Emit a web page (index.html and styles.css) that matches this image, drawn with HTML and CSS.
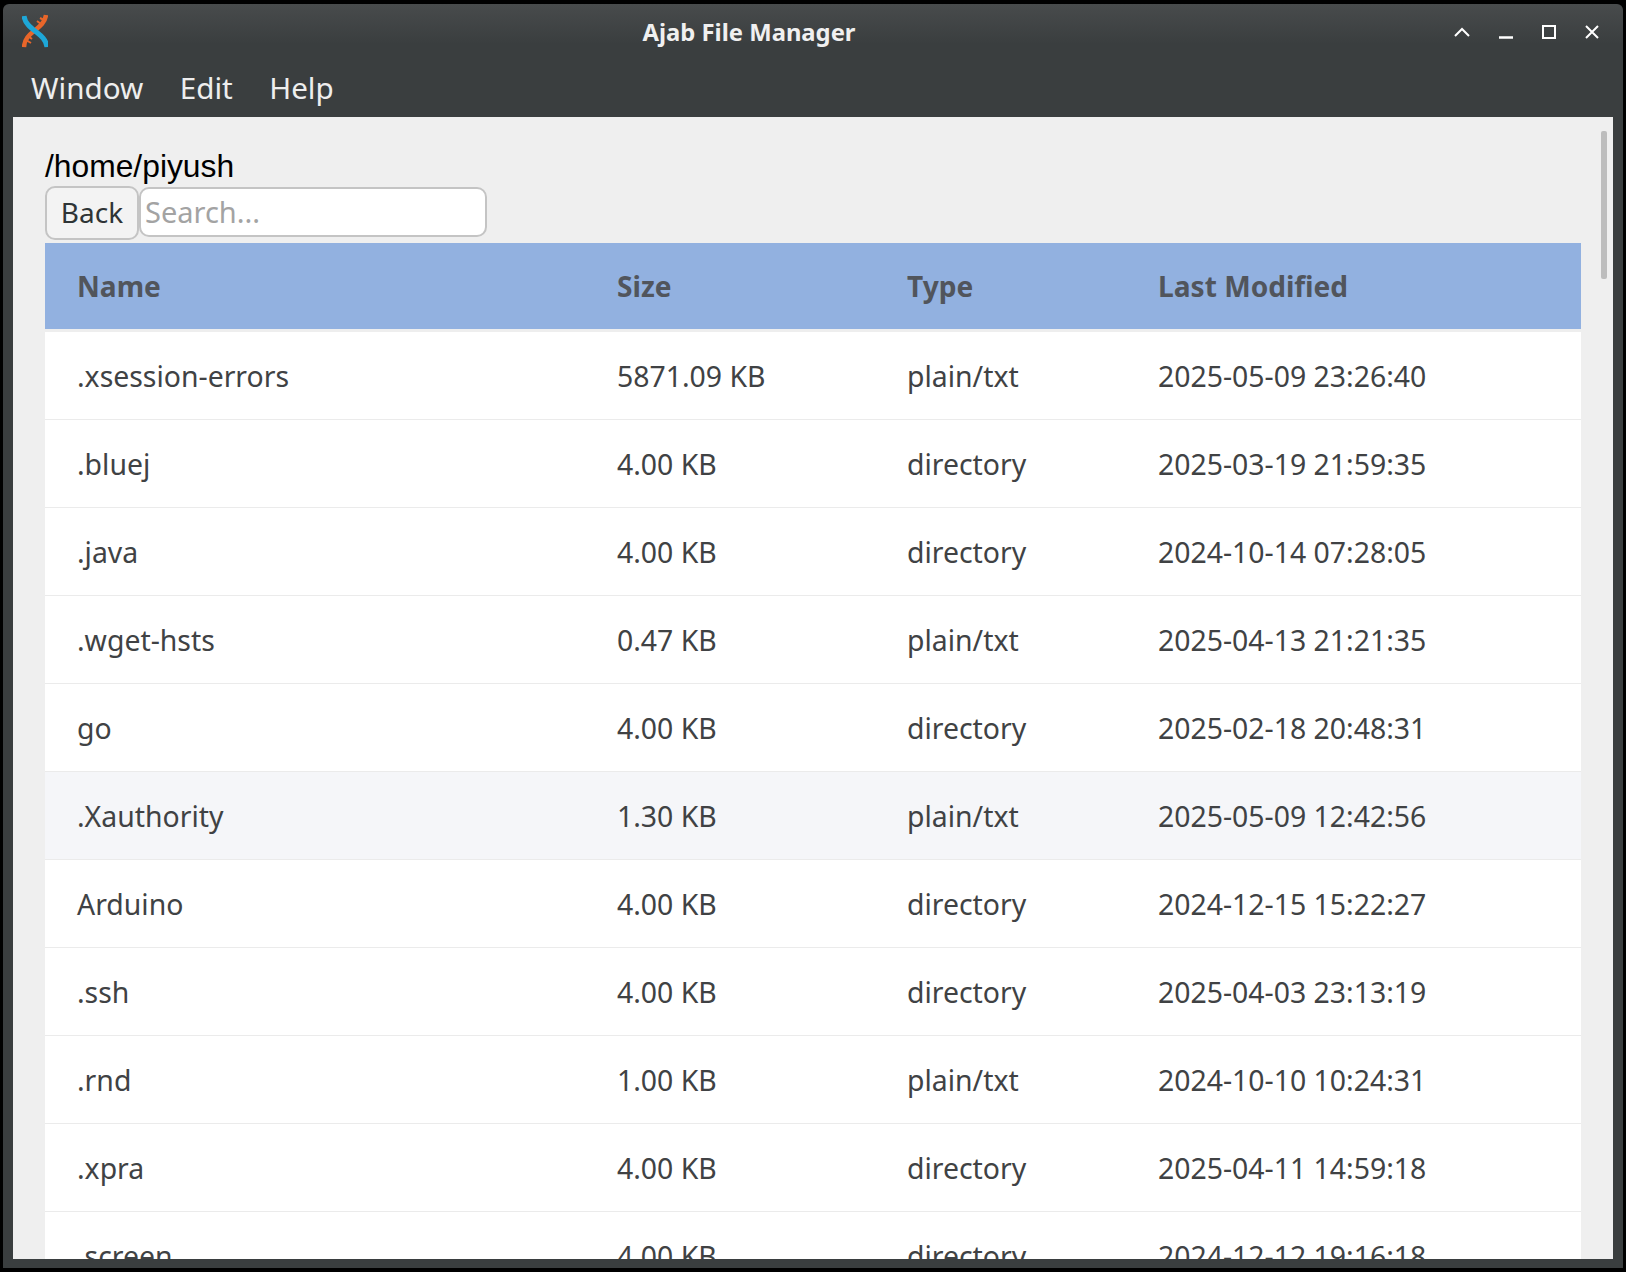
FILE: index.html
```html
<!DOCTYPE html>
<html lang="en">
<head>
  <meta charset="UTF-8">
  <title>Ajab File Manager</title>
  <link rel="stylesheet" href="styles.css">
</head>
<body>
  <div class="window">
    <div class="titlebar">
      <svg class="app-icon" viewBox="0 0 26 34" width="26" height="34">
        <path d="M24 1 C23 9 17 13 12 17 C7 21 2.500 25 2 33" fill="none" stroke="#e8662a" stroke-width="4.500"/>
        <path d="M15 7 L19 10 M18 4 L22 6 M4 26 L9 29 M6 22 L10 25" stroke="#e8662a" stroke-width="2"/>
        <path d="M2 2 C3 9 8 13 13 17 C18 21 24 25 25 33" fill="none" stroke="#1ea7d8" stroke-width="5"/>
      </svg>
      <div class="title">Ajab File Manager</div>
      <div class="controls">
        <svg viewBox="0 0 16 10" width="16" height="10"><path d="M1 9 L8 2 L15 9" fill="none" stroke="#fff" stroke-width="2"/></svg>
        <svg class="ctl-min" viewBox="0 0 14 3" width="14" height="3"><path d="M0 1.500 H14" stroke="#fff" stroke-width="2.500"/></svg>
        <svg viewBox="0 0 14 14" width="14" height="14"><rect x="1" y="1" width="12" height="12" fill="none" stroke="#fff" stroke-width="2"/></svg>
        <svg viewBox="0 0 14 14" width="14" height="14"><path d="M1 1 L13 13 M13 1 L1 13" fill="none" stroke="#fff" stroke-width="2"/></svg>
      </div>
    </div>
    <div class="menubar">
      <span>Window</span>
      <span>Edit</span>
      <span>Help</span>
    </div>
    <div class="content">
      <div class="scroll-thumb"></div>
      <div class="path">/home/piyush</div>
      <div class="toolbar">
        <button class="back">Back</button>
        <input class="search" type="text" placeholder="Search...">
      </div>
      <table class="files">
        <colgroup>
          <col class="col-name"><col class="col-size"><col class="col-type"><col class="col-date">
        </colgroup>
        <thead>
          <tr><th>Name</th><th>Size</th><th>Type</th><th>Last Modified</th></tr>
        </thead>
        <tbody>
          <tr><td>.xsession-errors</td><td>5871.09 KB</td><td>plain/txt</td><td>2025-05-09 23:26:40</td></tr>
          <tr><td>.bluej</td><td>4.00 KB</td><td>directory</td><td>2025-03-19 21:59:35</td></tr>
          <tr><td>.java</td><td>4.00 KB</td><td>directory</td><td>2024-10-14 07:28:05</td></tr>
          <tr><td>.wget-hsts</td><td>0.47 KB</td><td>plain/txt</td><td>2025-04-13 21:21:35</td></tr>
          <tr><td>go</td><td>4.00 KB</td><td>directory</td><td>2025-02-18 20:48:31</td></tr>
          <tr class="hover"><td>.Xauthority</td><td>1.30 KB</td><td>plain/txt</td><td>2025-05-09 12:42:56</td></tr>
          <tr><td>Arduino</td><td>4.00 KB</td><td>directory</td><td>2024-12-15 15:22:27</td></tr>
          <tr><td>.ssh</td><td>4.00 KB</td><td>directory</td><td>2025-04-03 23:13:19</td></tr>
          <tr><td>.rnd</td><td>1.00 KB</td><td>plain/txt</td><td>2024-10-10 10:24:31</td></tr>
          <tr><td>.xpra</td><td>4.00 KB</td><td>directory</td><td>2025-04-11 14:59:18</td></tr>
          <tr><td>.screen</td><td>4.00 KB</td><td>directory</td><td>2024-12-12 19:16:18</td></tr>
        </tbody>
      </table>
    </div>
  </div>
</body>
</html>
```

FILE: styles.css
```css
html, body {
  height: 100%;
}
body {
  margin: 0;
  padding: 4px 3px;
  box-sizing: border-box;
  background: #000;
  overflow: hidden;
  font-family: "Noto Sans", sans-serif;
}
.window {
  height: 100%;
  display: flex;
  flex-direction: column;
  background: linear-gradient(#484b4c, #3a3e3f 40px);
  border-radius: 6px 6px 0 0;
  padding: 0 10px 9px;
  box-sizing: border-box;
}
.titlebar {
  flex: none;
  height: 54px;
  display: flex;
  align-items: center;
  position: relative;
}
.app-icon {
  margin-left: 9px;
  margin-top: -1px;
}
.title {
  position: absolute;
  left: 0;
  right: 128px;
  top: 13px;
  text-align: center;
  color: #f0f0f0;
  font-size: 23.800px;
  font-weight: 700;
  line-height: 30px;
}
.controls {
  margin-left: auto;
  margin-top: 2px;
  margin-right: 14px;
  display: flex;
  align-items: center;
  gap: 29px;
}
.ctl-min {
  margin-top: 10px;
}
.menubar {
  flex: none;
  height: 59px;
  display: flex;
  gap: 36.500px;
  padding-left: 18px;
  color: #eeeeee;
  font-size: 29.600px;
  line-height: 60px;
}
.content {
  flex: 1;
  min-height: 0;
  overflow: hidden;
  position: relative;
  background: #efefef;
  padding: 30px 32px 0;
}
.scroll-thumb {
  position: absolute;
  top: 14px;
  right: 6px;
  width: 6px;
  height: 148px;
  background: #bdbdbd;
  border-radius: 2px;
}
.path {
  font-family: "Liberation Sans", sans-serif;
  font-size: 31.800px;
  line-height: 39px;
  color: #000;
}
.toolbar {
  display: flex;
  align-items: flex-start;
  height: 57px;
}
.back {
  width: 94px;
  height: 54px;
  padding: 0 0 2px;
  border: 2px solid #c4c4c4;
  border-radius: 10px;
  background: #f3f3f3;
  color: #2e3436;
  font-family: inherit;
  font-size: 28px;
}
.search {
  width: 336px;
  height: 44px;
  margin: 1px 0 0 0;
  padding: 0 4px 2px;
  border: 2px solid #c4c4c4;
  border-radius: 10px;
  background: #fff;
  box-sizing: content-box;
  font-family: inherit;
  font-size: 29px;
}
.search::placeholder {
  color: #a3a3a3;
  opacity: 1;
}
.files {
  width: 1536px;
  table-layout: fixed;
  border-collapse: collapse;
  background: #fff;
  font-size: 28.400px;
  color: #404244;
}
.col-name { width: 540px; }
.col-size { width: 290px; }
.col-type { width: 251px; }
.files th {
  height: 86px;
  padding: 0 0 0 32px;
  background: #92b1e0;
  color: #51555c;
  font-size: 28.100px;
  font-weight: 700;
  text-align: left;
  border-bottom: 3px solid #eeeeee;
}
.files td {
  height: 87px;
  padding: 0 0 0 32px;
  border-bottom: 1px solid #ebebeb;
}
.hover td {
  background: #f5f6f9;
}
```
